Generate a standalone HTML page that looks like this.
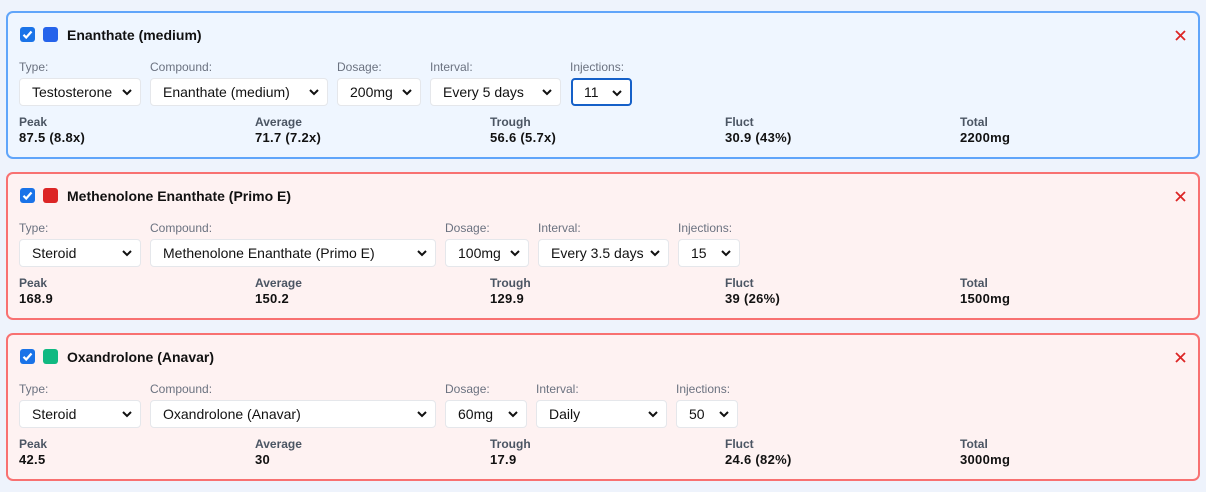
<!DOCTYPE html>
<html><head><meta charset="utf-8"><style>
*{box-sizing:border-box;margin:0;padding:0}
body{width:1206px;height:492px;background:#eef3fc;font-family:"Liberation Sans",sans-serif;position:relative;overflow:hidden}
.card{position:absolute;left:6px;width:1194px;height:148px;border:2px solid #f87171;background:#fef2f2;border-radius:7px}
.card.b{border-color:#60a5fa;background:#eff6ff}
.a{position:absolute}
.cb{left:12px;top:14px;width:15px;height:15px;background:#1a73e8;border-radius:3px}
.sq{left:35px;top:14px;width:15px;height:15px;border-radius:3px}
.title{left:59px;top:13px;font-size:14px;font-weight:bold;color:#111;line-height:18px}
.x{right:12px;top:17px}
.lbl{top:47px;font-size:12px;color:#6b7280;line-height:14px}
.sel{top:65px;height:28px;background:#fff;border:1px solid #e5e7eb;border-radius:4px;font-size:14px;color:#111;line-height:26px;padding-left:12px}
.sel svg{position:absolute;right:8px;top:10px}
.sel.f{border:2px solid #1560c8;line-height:24px;padding-left:11px}
.sl{top:103px;font-size:12px;font-weight:bold;color:#4b5563;line-height:13px}
.sv{top:118px;font-size:13px;font-weight:bold;color:#111;line-height:14px;letter-spacing:0.3px}
</style></head><body>
<div class="card b" style="top:11px">
<div class="a cb"><svg width="15" height="15"><path d="M3.5 7.8l2.7 2.7 5.3-6" stroke="#fff" stroke-width="2.2" fill="none"/></svg></div>
<div class="a sq" style="background:#2563eb"></div>
<div class="a title">Enanthate (medium)</div>
<svg class="a x" width="11" height="11"><path d="M1 1l9 9M10 1L1 10" stroke="#dc2626" stroke-width="1.8"/></svg>
<div class="a lbl" style="left:11px">Type:</div><div class="a sel" style="left:11px;width:122px">Testosterone<svg width="10" height="7"><path d="M1 1l4 4 4-4" stroke="#111" stroke-width="2" fill="none"/></svg></div>
<div class="a lbl" style="left:142px">Compound:</div><div class="a sel" style="left:142px;width:178px">Enanthate (medium)<svg width="10" height="7"><path d="M1 1l4 4 4-4" stroke="#111" stroke-width="2" fill="none"/></svg></div>
<div class="a lbl" style="left:329px">Dosage:</div><div class="a sel" style="left:329px;width:84px">200mg<svg width="10" height="7"><path d="M1 1l4 4 4-4" stroke="#111" stroke-width="2" fill="none"/></svg></div>
<div class="a lbl" style="left:422px">Interval:</div><div class="a sel" style="left:422px;width:131px">Every 5 days<svg width="10" height="7"><path d="M1 1l4 4 4-4" stroke="#111" stroke-width="2" fill="none"/></svg></div>
<div class="a lbl" style="left:562px">Injections:</div><div class="a sel f" style="left:563px;width:61px">11<svg width="10" height="7"><path d="M1 1l4 4 4-4" stroke="#111" stroke-width="2" fill="none"/></svg></div>
<div class="a sl" style="left:11px">Peak</div><div class="a sv" style="left:11px">87.5 (8.8x)</div>
<div class="a sl" style="left:247px">Average</div><div class="a sv" style="left:247px">71.7 (7.2x)</div>
<div class="a sl" style="left:482px">Trough</div><div class="a sv" style="left:482px">56.6 (5.7x)</div>
<div class="a sl" style="left:717px">Fluct</div><div class="a sv" style="left:717px">30.9 (43%)</div>
<div class="a sl" style="left:952px">Total</div><div class="a sv" style="left:952px">2200mg</div>
</div>

<div class="card" style="top:172px">
<div class="a cb"><svg width="15" height="15"><path d="M3.5 7.8l2.7 2.7 5.3-6" stroke="#fff" stroke-width="2.2" fill="none"/></svg></div>
<div class="a sq" style="background:#dc2626"></div>
<div class="a title">Methenolone Enanthate (Primo E)</div>
<svg class="a x" width="11" height="11"><path d="M1 1l9 9M10 1L1 10" stroke="#dc2626" stroke-width="1.8"/></svg>
<div class="a lbl" style="left:11px">Type:</div><div class="a sel" style="left:11px;width:122px">Steroid<svg width="10" height="7"><path d="M1 1l4 4 4-4" stroke="#111" stroke-width="2" fill="none"/></svg></div>
<div class="a lbl" style="left:142px">Compound:</div><div class="a sel" style="left:142px;width:286px">Methenolone Enanthate (Primo E)<svg width="10" height="7"><path d="M1 1l4 4 4-4" stroke="#111" stroke-width="2" fill="none"/></svg></div>
<div class="a lbl" style="left:437px">Dosage:</div><div class="a sel" style="left:437px;width:84px">100mg<svg width="10" height="7"><path d="M1 1l4 4 4-4" stroke="#111" stroke-width="2" fill="none"/></svg></div>
<div class="a lbl" style="left:530px">Interval:</div><div class="a sel" style="left:530px;width:131px">Every 3.5 days<svg width="10" height="7"><path d="M1 1l4 4 4-4" stroke="#111" stroke-width="2" fill="none"/></svg></div>
<div class="a lbl" style="left:670px">Injections:</div><div class="a sel" style="left:670px;width:62px">15<svg width="10" height="7"><path d="M1 1l4 4 4-4" stroke="#111" stroke-width="2" fill="none"/></svg></div>
<div class="a sl" style="left:11px">Peak</div><div class="a sv" style="left:11px">168.9</div>
<div class="a sl" style="left:247px">Average</div><div class="a sv" style="left:247px">150.2</div>
<div class="a sl" style="left:482px">Trough</div><div class="a sv" style="left:482px">129.9</div>
<div class="a sl" style="left:717px">Fluct</div><div class="a sv" style="left:717px">39 (26%)</div>
<div class="a sl" style="left:952px">Total</div><div class="a sv" style="left:952px">1500mg</div>
</div>

<div class="card" style="top:333px">
<div class="a cb"><svg width="15" height="15"><path d="M3.5 7.8l2.7 2.7 5.3-6" stroke="#fff" stroke-width="2.2" fill="none"/></svg></div>
<div class="a sq" style="background:#10b981"></div>
<div class="a title">Oxandrolone (Anavar)</div>
<svg class="a x" width="11" height="11"><path d="M1 1l9 9M10 1L1 10" stroke="#dc2626" stroke-width="1.8"/></svg>
<div class="a lbl" style="left:11px">Type:</div><div class="a sel" style="left:11px;width:122px">Steroid<svg width="10" height="7"><path d="M1 1l4 4 4-4" stroke="#111" stroke-width="2" fill="none"/></svg></div>
<div class="a lbl" style="left:142px">Compound:</div><div class="a sel" style="left:142px;width:286px">Oxandrolone (Anavar)<svg width="10" height="7"><path d="M1 1l4 4 4-4" stroke="#111" stroke-width="2" fill="none"/></svg></div>
<div class="a lbl" style="left:437px">Dosage:</div><div class="a sel" style="left:437px;width:82px">60mg<svg width="10" height="7"><path d="M1 1l4 4 4-4" stroke="#111" stroke-width="2" fill="none"/></svg></div>
<div class="a lbl" style="left:528px">Interval:</div><div class="a sel" style="left:528px;width:131px">Daily<svg width="10" height="7"><path d="M1 1l4 4 4-4" stroke="#111" stroke-width="2" fill="none"/></svg></div>
<div class="a lbl" style="left:668px">Injections:</div><div class="a sel" style="left:668px;width:62px">50<svg width="10" height="7"><path d="M1 1l4 4 4-4" stroke="#111" stroke-width="2" fill="none"/></svg></div>
<div class="a sl" style="left:11px">Peak</div><div class="a sv" style="left:11px">42.5</div>
<div class="a sl" style="left:247px">Average</div><div class="a sv" style="left:247px">30</div>
<div class="a sl" style="left:482px">Trough</div><div class="a sv" style="left:482px">17.9</div>
<div class="a sl" style="left:717px">Fluct</div><div class="a sv" style="left:717px">24.6 (82%)</div>
<div class="a sl" style="left:952px">Total</div><div class="a sv" style="left:952px">3000mg</div>
</div>
</body></html>
